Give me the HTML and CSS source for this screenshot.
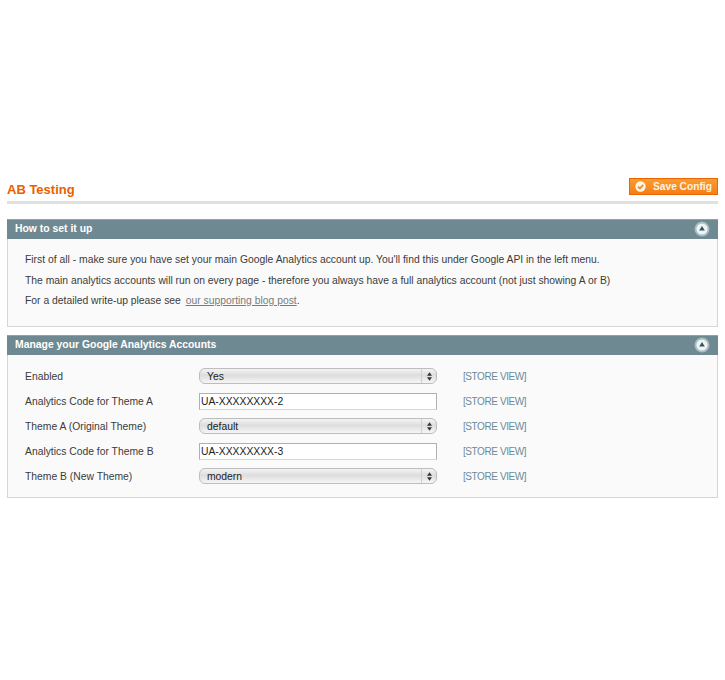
FILE: index.html
```html
<!DOCTYPE html>
<html lang="en">
<head>
<meta charset="utf-8">
<title>AB Testing</title>
<link rel="stylesheet" href="styles.css">
</head>
<body>
<main class="page">
  <header class="head">
    <h1 class="title">AB Testing</h1>
    <button class="save" type="button">
      <svg class="save-icon" width="11" height="11" viewBox="0 0 12 12"><circle cx="6" cy="6" r="5.6" fill="#fff6e8"/><path d="M3.2 6.1 5.3 8.2 8.9 4.2" fill="none" stroke="#f08a1e" stroke-width="1.9"/></svg>
      Save Config
    </button>
  </header>

  <section class="panel">
    <div class="bar">
      <h2 class="bar-title">How to set it up</h2>
      <svg class="toggle" width="16" height="16" viewBox="0 0 16 16"><circle cx="8" cy="8" r="7.5" fill="#a9bcc2"/><circle cx="8" cy="8" r="5.6" fill="#eef3f4"/><path d="M8 5 10.8 9.6H5.2Z" fill="#2f5566"/></svg>
    </div>
    <div class="body intro">
      <p>First of all - make sure you have set your main Google Analytics account up. You'll find this under Google API in the left menu.</p>
      <p>The main analytics accounts will run on every page - therefore you always have a full analytics account (not just showing A or B)</p>
      <p>For a detailed write-up please see <a class="link" href="#">our supporting blog post</a>.</p>
    </div>
  </section>

  <section class="panel">
    <div class="bar">
      <h2 class="bar-title">Manage your Google Analytics Accounts</h2>
      <svg class="toggle" width="16" height="16" viewBox="0 0 16 16"><circle cx="8" cy="8" r="7.5" fill="#a9bcc2"/><circle cx="8" cy="8" r="5.6" fill="#eef3f4"/><path d="M8 5 10.8 9.6H5.2Z" fill="#2f5566"/></svg>
    </div>
    <div class="body form">
      <div class="row">
        <span class="label">Enabled</span>
        <div class="select"><span class="value">Yes</span><span class="arrows"><svg width="5" height="9" viewBox="0 0 6 10"><path d="M3 0 6 4H0ZM3 10 0 6H6Z" fill="#333"/></svg></span></div>
        <span class="scope">[STORE VIEW]</span>
      </div>
      <div class="row">
        <span class="label">Analytics Code for Theme A</span>
        <input class="input" type="text" value="UA-XXXXXXXX-2">
        <span class="scope">[STORE VIEW]</span>
      </div>
      <div class="row">
        <span class="label">Theme A (Original Theme)</span>
        <div class="select"><span class="value">default</span><span class="arrows"><svg width="5" height="9" viewBox="0 0 6 10"><path d="M3 0 6 4H0ZM3 10 0 6H6Z" fill="#333"/></svg></span></div>
        <span class="scope">[STORE VIEW]</span>
      </div>
      <div class="row">
        <span class="label">Analytics Code for Theme B</span>
        <input class="input" type="text" value="UA-XXXXXXXX-3">
        <span class="scope">[STORE VIEW]</span>
      </div>
      <div class="row">
        <span class="label">Theme B (New Theme)</span>
        <div class="select"><span class="value">modern</span><span class="arrows"><svg width="5" height="9" viewBox="0 0 6 10"><path d="M3 0 6 4H0ZM3 10 0 6H6Z" fill="#333"/></svg></span></div>
        <span class="scope">[STORE VIEW]</span>
      </div>
    </div>
  </section>
</main>
</body>
</html>
```

FILE: styles.css
```css
* { box-sizing: border-box; }

html, body { margin: 0; background: #fff; }

body {
  font-family: "Liberation Sans", Arial, sans-serif;
  font-size: 10.35px;
  color: #3a3a3a;
}

.page {
  width: 725px;
  height: 680px;
  padding: 178px 7px 0;
}

.head {
  display: flex;
  justify-content: space-between;
  align-items: flex-start;
  height: 26px;
  border-bottom: 3px solid #e0e0e0;
  margin-bottom: 15px;
}

.title {
  margin: 4px 0 0;
  font-size: 13px;
  line-height: 16px;
  font-weight: bold;
  color: #eb5e00;
}

.save {
  display: flex;
  align-items: center;
  gap: 7px;
  width: 89px;
  height: 17px;
  margin: 0;
  padding: 0 0 1px 5px;
  border: 1px solid #ed6502;
  background: linear-gradient(#fb9c30, #f47f16);
  color: #fff3e0;
  font: bold 10.2px "Liberation Sans", Arial, sans-serif;
}

.save-icon { flex: none; }

.panel { margin-bottom: 8px; }

.bar {
  display: flex;
  justify-content: space-between;
  align-items: center;
  height: 20px;
  padding: 0 8px 2px;
  background: #6f8992;
  border-top: 1px solid #8fa3aa;
}

.bar-title {
  margin: 0;
  font-size: 10.4px;
  line-height: 16px;
  font-weight: bold;
  color: #fff;
}

.body {
  background: #fafafa;
  border: 1px solid #d6d6d6;
  border-top: 0;
}

.intro {
  height: 88px;
  padding: 14px 17px 0;
}

.intro p {
  margin: 0 0 7.5px;
  line-height: 13px;
}

.link { color: #7b7b7b; margin-left: 2px; }

.form {
  height: 143px;
  padding: 8.5px 0 0 17px;
}

.row {
  display: flex;
  align-items: center;
  height: 25px;
}

.label { width: 174px; flex: none; }

.select {
  display: flex;
  align-items: center;
  justify-content: space-between;
  width: 238px;
  height: 16px;
  border: 1px solid #bdbdbd;
  border-radius: 6px;
  background: linear-gradient(#f4f4f4, #dddddd 45%, #f6f6f6);
  color: #222;
  flex: none;
}

.value { padding-left: 7px; }

.arrows {
  display: flex;
  align-items: center;
  justify-content: center;
  width: 15px;
  height: 100%;
  border-left: 1px solid #d0d0d0;
}

.input {
  width: 238px;
  height: 17px;
  flex: none;
  padding: 0 1px;
  border: 1px solid #b0b0b0;
  border-bottom-color: #d8d8d8;
  background: #fff;
  color: #222;
  font: 10.35px "Liberation Sans", Arial, sans-serif;
}

.scope {
  margin-left: 26px;
  font-size: 10px;
  letter-spacing: -0.42px;
  color: #6d8a98;
}
```
